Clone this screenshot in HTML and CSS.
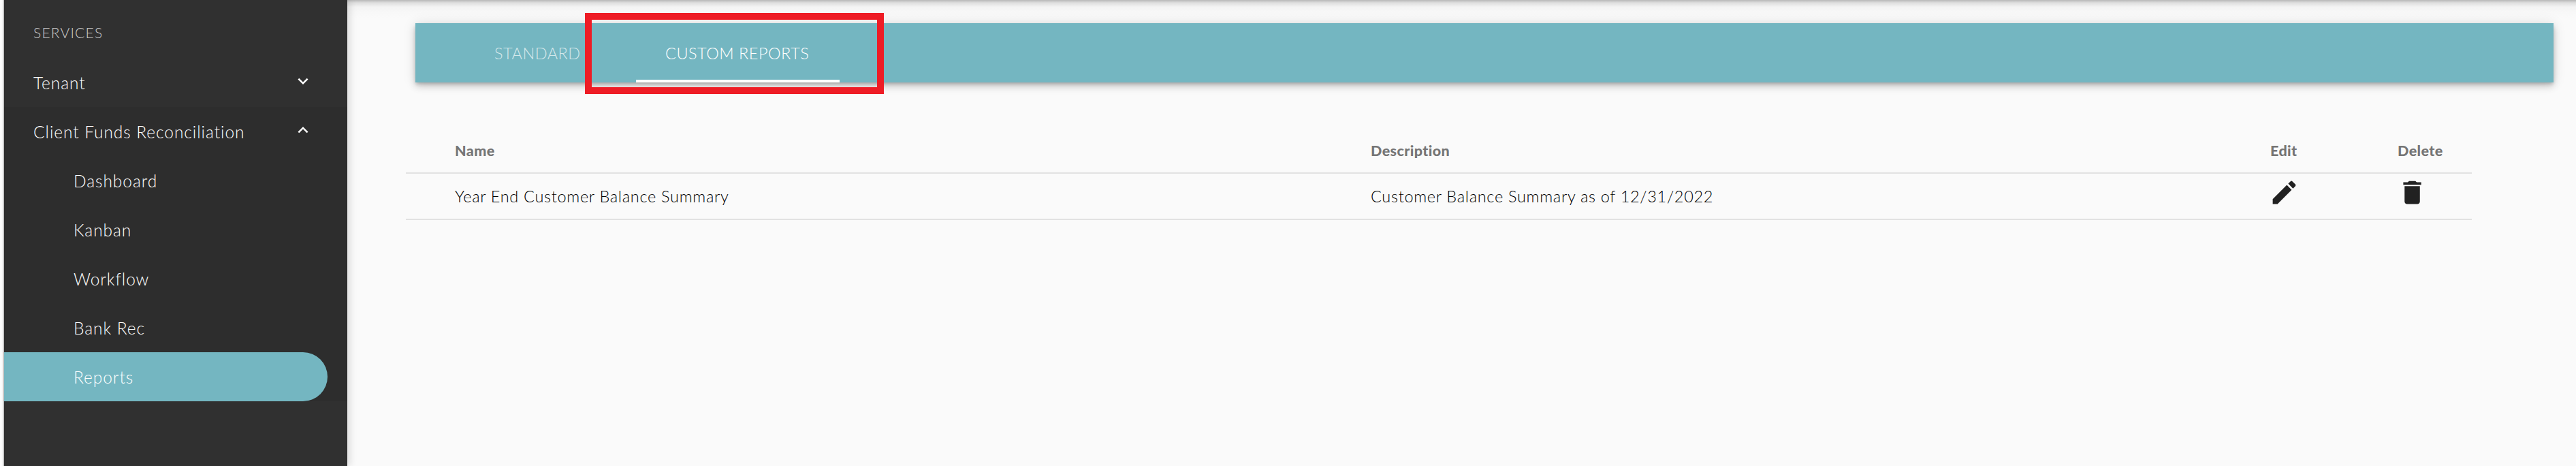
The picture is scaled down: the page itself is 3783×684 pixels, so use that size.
FILE: index.html
```html
<!DOCTYPE html>
<html lang="en">
<head>
<meta charset="utf-8">
<title>Custom Reports</title>
<link rel="stylesheet" href="styles.css">
</head>
<body>
<div class="app">
  <nav class="sidebar">
    <div class="section-label">SERVICES</div>
    <div class="nav-row"><span>Tenant</span>
      <svg class="chev" viewBox="0 0 24 24"><path d="M16.59 8.59L12 13.17 7.41 8.59 6 10l6 6 6-6z"/></svg></div>
    <div class="nav-group">
      <div class="nav-row"><span>Client Funds Reconciliation</span>
        <svg class="chev" viewBox="0 0 24 24"><path d="M12 8l-6 6 1.41 1.41L12 10.83l4.59 4.58L18 14z"/></svg></div>
      <div class="nav-row sub">Dashboard</div>
      <div class="nav-row sub">Kanban</div>
      <div class="nav-row sub">Workflow</div>
      <div class="nav-row sub">Bank Rec</div>
      <div class="nav-row sub active">Reports</div>
    </div>
  </nav>
  <main class="main">
    <div class="tabbar">
      <div class="tab">STANDARD</div>
      <div class="tab current">CUSTOM REPORTS</div>
    </div>
    <div class="highlight"></div>
    <div class="table">
      <div class="tr head">
        <div>Name</div><div>Description</div><div>Edit</div><div>Delete</div>
      </div>
      <div class="tr">
        <div>Year End Customer Balance Summary</div>
        <div>Customer Balance Summary as of 12/31/2022</div>
        <div><svg class="icon pencil" viewBox="0 0 24 24"><path d="M3 17.25V21h3.75L17.81 9.94l-3.75-3.75L3 17.25zM20.71 7.04c.39-.39.39-1.02 0-1.41l-2.34-2.34c-.39-.39-1.02-.39-1.41 0l-1.83 1.83 3.75 3.75 1.83-1.83z"/></svg></div>
        <div><svg class="icon trash" viewBox="0 0 24 24"><path d="M6 19c0 1.1.9 2 2 2h8c1.1 0 2-.9 2-2V7H6v12zM19 4h-3.5l-1-1h-5l-1 1H5v2h14V4z"/></svg></div>
      </div>
    </div>
  </main>
</div>
</body>
</html>
```
FILE: styles.css
```css
* { box-sizing: border-box; }
html, body { margin: 0; height: 100%; overflow: hidden; }
body { background: #fff; font-family: Lato, "Liberation Sans", sans-serif; }
.app { display: flex; height: 684px; padding-left: 4px; }
.sidebar {
  width: 506px; flex: none; background: #303030; color: #fff;
  border-left: 2px solid #c8c8c8; padding-top: 12px;
  position: relative; z-index: 2;
  box-shadow: 4px 0 10px rgba(0,0,0,.12);
}
.section-label { height: 73px; line-height: 72px; padding-left: 43px; font-size: 21px; letter-spacing: 1.2px; font-weight: 300; color: #c8c8c8; }
.nav-row {
  height: 72px; display: flex; align-items: center; justify-content: space-between;
  padding-left: 43px; padding-right: 50px; font-size: 24.5px; letter-spacing: .95px; font-weight: 300; color: #fff;
}
.nav-group { background: #2d2d2d; }
.sub { padding-left: 102px; }
.active { background: #74b6c1; width: 475px; border-radius: 0 36px 36px 0; }
.chev { width: 30px; height: 30px; fill: #fff; margin-top: -4px; }
.main {
  flex: 1; position: relative; min-width: 0; padding: 34px 33px 0 100px;
  background: linear-gradient(#b8b8b8 0, #dedede 4px, #f3f3f3 10px, #f8f8f8 18px, #fafafa 28px);
}
.tabbar {
  height: 87px; background: #74b6c1; display: flex; padding-left: 50px;
  box-shadow: 0 3px 5px -1px rgba(0,0,0,.2), 0 6px 10px 0 rgba(0,0,0,.14), 0 1px 18px 0 rgba(0,0,0,.12);
  font-size: 23.5px; letter-spacing: .5px; font-weight: 300;
}
.tab { height: 87px; padding-top: 32px; line-height: 24px; color: rgba(255,255,255,.7); width: 203px; flex: none; padding-left: 66px; white-space: nowrap; }
.tab.current { color: #fff; width: 299px; margin-left: 71px; padding-left: 43px; border-bottom: 4px solid #fff; }
.highlight { position: absolute; left: 349px; top: 19px; width: 439px; height: 119px; border: solid #ee1c25; border-width: 10px; }
.table { margin: 68px 0 0 -14px; width: 3034px; }
.tr { display: grid; grid-template-columns: 1345px 1321px 187px 1fr; height: 68px; align-items: center; border-bottom: 2px solid #e2e2e2; font-size: 23.5px; letter-spacing: .7px; font-weight: 300; color: #000; padding-left: 72px; }
.head { height: 66px; font-weight: 900; color: #757575; font-size: 21.5px; letter-spacing: .4px; }
.icon { width: 45px; height: 45px; fill: #212121; display: block; margin-top: -11px; }
.pencil { margin-left: -2px; }
.trash { margin-left: -1px; }
```
